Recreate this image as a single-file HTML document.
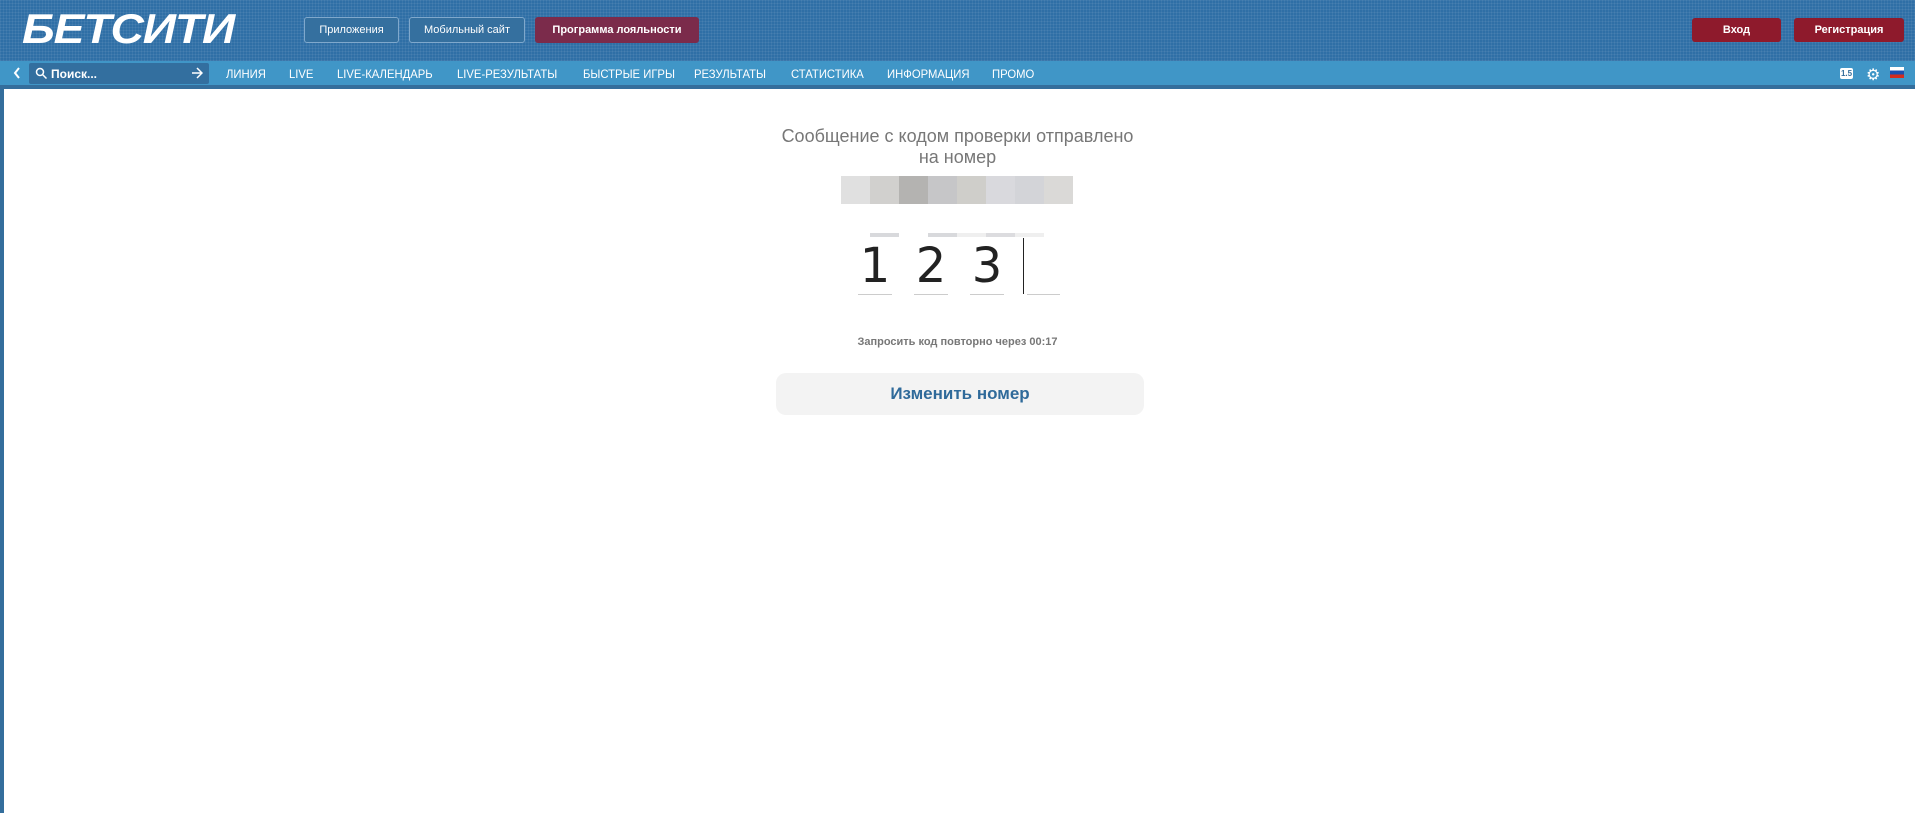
<!DOCTYPE html>
<html><head><meta charset="utf-8"><style>
*{margin:0;padding:0;box-sizing:border-box}
body{width:1915px;height:813px;overflow:hidden;background:#fff;font-family:"Liberation Sans",sans-serif;position:relative}
.top{position:absolute;left:0;top:0;width:1915px;height:61px;background:#2f6fa6;background-image:linear-gradient(rgba(255,255,255,.06) 1px,transparent 1px),linear-gradient(90deg,rgba(255,255,255,.06) 1px,transparent 1px);background-size:3px 3px}
.nav{position:absolute;left:0;top:61px;width:1915px;height:24px;background:#4096c7}
.strip{position:absolute;left:0;top:85px;width:1915px;height:4px;background:#346e9c}
.lb{position:absolute;left:0;top:89px;width:4px;height:724px;background:#346e9c}
.logo{position:absolute;left:22px;top:5px;color:#fff;font-weight:bold;font-style:italic;font-size:42px;letter-spacing:-1px;transform:scaleX(1.1);transform-origin:left;white-space:nowrap}
.btn{position:absolute;top:17px;height:26px;border:1px solid #7fa8cc;border-radius:3px;color:#fff;font-size:11px;display:flex;align-items:center;justify-content:center;background:#35709f;white-space:nowrap}
.red{background:#8e1a2c;border:none;font-weight:bold;top:18px;height:24px}
.ni{position:absolute;top:67px;color:#fff;font-size:12px;white-space:nowrap;transform:scaleX(.94);transform-origin:left}
.search{position:absolute;left:29px;top:63px;width:180px;height:21px;background:#336f9f;border-radius:2px;color:#fff;font-size:12px;font-weight:bold}
.t{position:absolute;left:0;width:1915px;text-align:center;color:#777}
.d{position:absolute;top:238px;width:34px;text-align:center;font-size:48px;color:#222;font-family:'DejaVu Sans',sans-serif}
</style></head><body>
<div class="top"></div><div class="nav"></div><div class="strip"></div><div class="lb"></div>
<div class="logo">БЕТСИТИ</div>
<div class="btn" style="left:304px;width:95px">Приложения</div>
<div class="btn" style="left:409px;width:116px">Мобильный сайт</div>
<div class="btn" style="left:535px;width:164px;background:#7b2b4b;border:none;font-weight:bold">Программа лояльности</div>
<div class="btn red" style="left:1692px;width:89px">Вход</div>
<div class="btn red" style="left:1794px;width:110px">Регистрация</div>
<svg style="position:absolute;left:13px;top:67px" width="8" height="12"><path d="M6 1L2 6l4 5" stroke="#fff" stroke-width="2" fill="none"/></svg>
<div class="search">
<svg style="position:absolute;left:6px;top:4px" width="12" height="12"><circle cx="5" cy="5" r="3.5" stroke="#fff" stroke-width="1.5" fill="none"/><path d="M7.5 7.5l4 4" stroke="#fff" stroke-width="1.5"/></svg>
<span style="position:absolute;left:22px;top:4px">Поиск...</span>
<svg style="position:absolute;left:162px;top:4px" width="12" height="12"><path d="M1 6h10M6 1l5 5-5 5" stroke="#fff" stroke-width="1.5" fill="none"/></svg>
</div>
<div class="ni" style="left:226px">ЛИНИЯ</div>
<div class="ni" style="left:289px">LIVE</div>
<div class="ni" style="left:337px">LIVE-КАЛЕНДАРЬ</div>
<div class="ni" style="left:457px">LIVE-РЕЗУЛЬТАТЫ</div>
<div class="ni" style="left:583px">БЫСТРЫЕ ИГРЫ</div>
<div class="ni" style="left:694px">РЕЗУЛЬТАТЫ</div>
<div class="ni" style="left:791px">СТАТИСТИКА</div>
<div class="ni" style="left:887px">ИНФОРМАЦИЯ</div>
<div class="ni" style="left:992px">ПРОМО</div>
<div style="position:absolute;left:1840px;top:68px;width:13px;height:11px;background:#fff;border-radius:2px;color:#346e9c;font-size:8px;font-weight:bold;text-align:center;line-height:11px">1.5</div>
<div style="position:absolute;left:1866px;top:65px;color:#fff;font-size:16px">⚙</div>
<div style="position:absolute;left:1890px;top:67px;width:14px;height:11px;background:linear-gradient(#fff 33%,#1c4fb0 33%,#1c4fb0 66%,#d52b1e 66%)"></div>
<div class="t" style="top:126px;font-size:18px;line-height:21px">Сообщение с кодом проверки отправлено<br>на номер</div>
<div style="position:absolute;left:841px;top:176px;height:28px;display:flex">
<div style="width:29px;background:#e0e0e0"></div><div style="width:29px;background:#d1d0ce"></div><div style="width:29px;background:#b4b3b1"></div><div style="width:29px;background:#c6c6c8"></div><div style="width:29px;background:#cfceca"></div><div style="width:29px;background:#d9d9dd"></div><div style="width:29px;background:#d3d4d8"></div><div style="width:29px;background:#dad9d7"></div></div>
<div style="position:absolute;left:870px;top:233px;width:29px;height:4px;background:#d8d9dc"></div>
<div style="position:absolute;left:928px;top:233px;width:29px;height:4px;background:#d8d9dc"></div>
<div style="position:absolute;left:957px;top:233px;width:29px;height:4px;background:#efefef"></div>
<div style="position:absolute;left:986px;top:233px;width:29px;height:4px;background:#dcdcdf"></div>
<div style="position:absolute;left:1015px;top:233px;width:29px;height:4px;background:#efefef"></div>
<div class="d" style="left:858px">1</div>
<div class="d" style="left:914px">2</div>
<div class="d" style="left:970px">3</div>
<div style="position:absolute;top:294px;left:858px;width:34px;height:1px;background:#ccc"></div>
<div style="position:absolute;top:294px;left:914px;width:34px;height:1px;background:#ccc"></div>
<div style="position:absolute;top:294px;left:970px;width:34px;height:1px;background:#ccc"></div>
<div style="position:absolute;top:294px;left:1027px;width:33px;height:1px;background:#ccc"></div>
<div style="position:absolute;top:238px;left:1023px;width:1px;height:56px;background:#222"></div>
<div class="t" style="top:336px;font-size:11px;font-weight:bold">Запросить код повторно через 00:17</div>
<div style="position:absolute;left:776px;top:373px;width:368px;height:42px;background:#f3f3f3;border-radius:10px;color:#2f6a9a;font-weight:bold;font-size:17px;text-align:center;line-height:42px">Изменить номер</div>
</body></html>
